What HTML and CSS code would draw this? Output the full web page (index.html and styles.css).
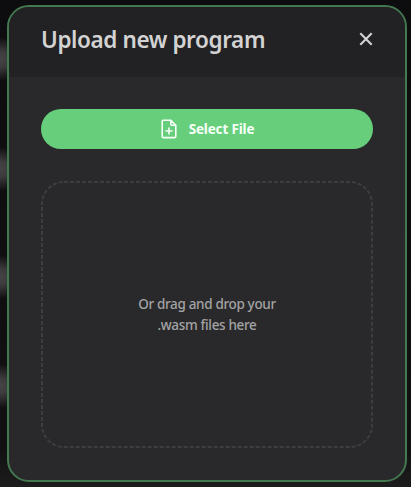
FILE: index.html
```
<!DOCTYPE html>
<html lang="en">
<head>
<meta charset="utf-8">
<title>Upload new program</title>
<link rel="stylesheet" href="styles.css">
</head>
<body>
<main class="modal">
  <header class="modal-header">
    <h1 class="title">Upload new program</h1>
    <button class="close" aria-label="Close">
      <svg width="14" height="14" viewBox="0 0 14 14" fill="none" stroke="currentColor" stroke-width="2.1"><path d="M1.3 1.3 12.7 12.7M12.7 1.3 1.3 12.7"/></svg>
    </button>
  </header>
  <div class="modal-body">
    <button class="select">
      <svg class="file-icon" width="16" height="20" viewBox="0 0 16 20" fill="none" stroke="currentColor" stroke-width="1.6" stroke-linejoin="round" stroke-linecap="round"><path d="M9.8 1.2H2.2Q1.2 1.2 1.2 2.2V17.6Q1.2 18.6 2.2 18.6H13.8Q14.8 18.6 14.8 17.6V6.2L9.8 1.2V5.2Q9.8 6.2 10.8 6.2H14.8M8 9V15M5 12H11"/></svg>
      <span class="select-text">Select File</span>
    </button>
    <section class="dropzone">
      <svg class="dashes" width="332" height="267"><rect x="1" y="1" width="330" height="265" rx="22" fill="none" stroke="#3d3d3f" stroke-width="2" stroke-dasharray="4 2"/></svg>
      <p class="hint"><span class="line">Or drag and drop your</span><span class="line">.wasm files here</span></p>
    </section>
  </div>
</main>
</body>
</html>
```
FILE: styles.css
```
* { box-sizing: border-box; }
body {
  margin: 0;
  width: 411px;
  height: 487px;
  padding: 4.5px 4px 5px 7px;
  overflow: hidden;
  font-family: "Noto Sans", "Open Sans", sans-serif;
  background:
    radial-gradient(ellipse 24px 22px at 0 59px, #444 0%, #3c3c3c 35%, transparent 100%),
    radial-gradient(ellipse 24px 22px at 0 169px, #444 0%, #3c3c3c 35%, transparent 100%),
    radial-gradient(ellipse 24px 22px at 0 277px, #444 0%, #3c3c3c 35%, transparent 100%),
    radial-gradient(ellipse 24px 22px at 0 386px, #444 0%, #3c3c3c 35%, transparent 100%),
    linear-gradient(#0d0d0f, #111113 450px, #1d1c1d);
}
button {
  border: 0;
  padding: 0;
  font-family: inherit;
}
.modal {
  display: flex;
  flex-direction: column;
  height: 477.5px;
  border: 2px solid #437850;
  border-radius: 22px;
  background: #29292b;
  overflow: hidden;
}
.modal-header {
  flex: 0 0 70px;
  display: flex;
  align-items: center;
  justify-content: space-between;
  padding: 0 32px 4px;
  background: #222224;
  color: #d3d3d3;
}
.title {
  margin: 0;
  font-size: 22.5px;
  font-weight: 650;
  line-height: 36px;
  letter-spacing: -0.4px;
  white-space: nowrap;
}
.close {
  display: flex;
  margin-bottom: 1px;
  background: none;
  color: #d3d3d3;
}
.modal-body {
  display: flex;
  flex-direction: column;
  gap: 32px;
  padding: 32px;
}
.select {
  display: flex;
  align-items: center;
  justify-content: center;
  gap: 12px;
  height: 40px;
  padding-left: 1px;
  border-radius: 20px;
  background: #67cf7c;
  color: #f6fff7;
  font-size: 13.5px;
  font-weight: 700;
}
.select-text { letter-spacing: -0.17px; }
.dropzone {
  position: relative;
  display: flex;
  align-items: center;
  justify-content: center;
  height: 267px;
}
.dashes {
  position: absolute;
  inset: 0;
}
.hint {
  margin: 1px 0 0;
  color: #a3a3a4;
  font-size: 13.5px;
  font-weight: 500;
  line-height: 21px;
  letter-spacing: -0.34px;
  text-align: center;
}
.line { display: block; }
```
